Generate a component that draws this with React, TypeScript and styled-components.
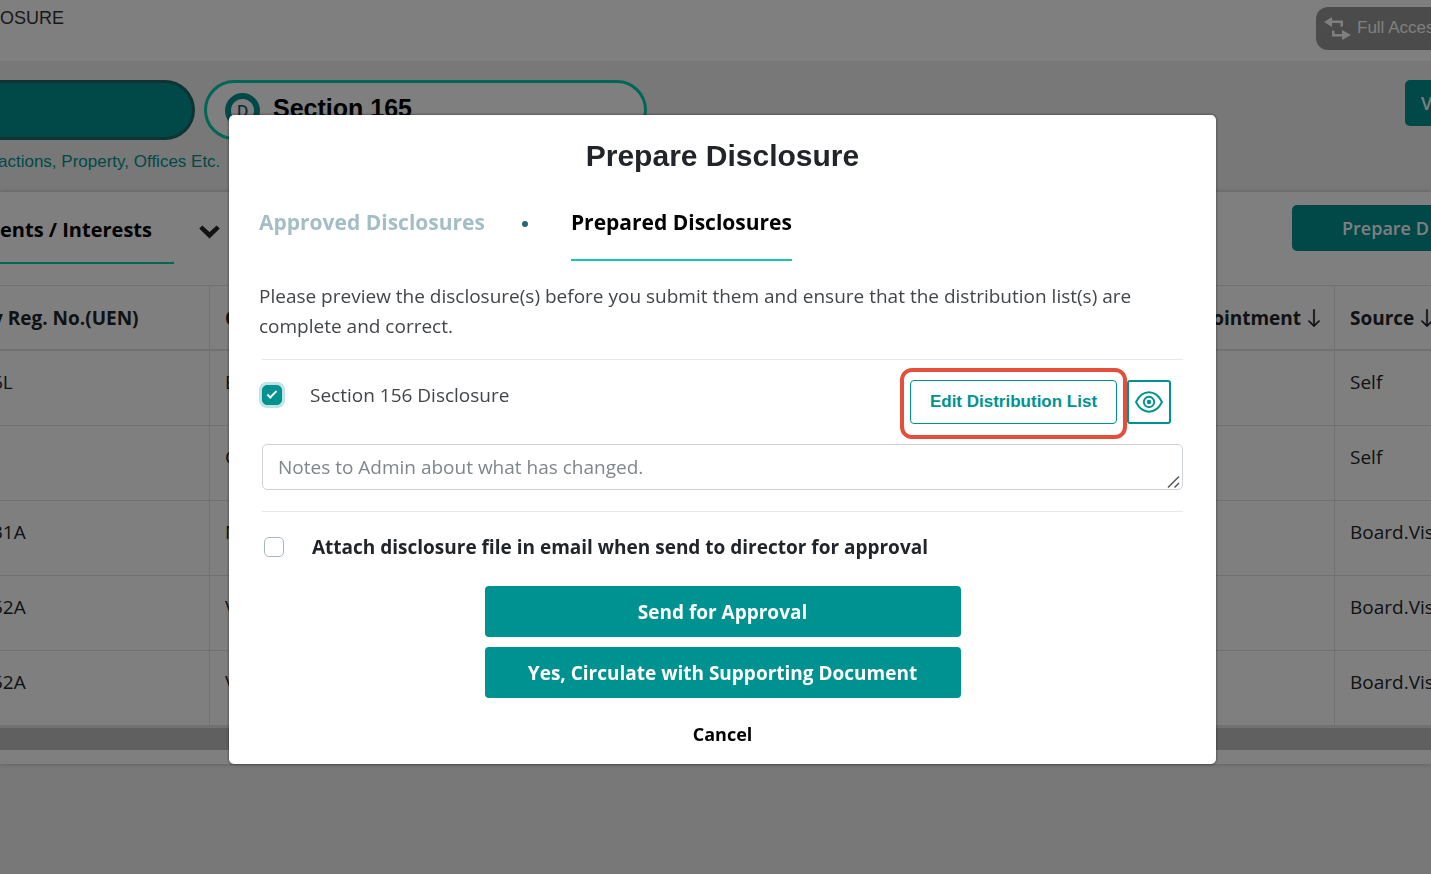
import React from "react";
import styled, { createGlobalStyle, css } from "styled-components";
import { BsArrowDown } from "react-icons/bs";

const teal = "#009290";
const mint = "#00cfae";
const ui = `"Open Sans", "Noto Sans", sans-serif`;
const arial = `"Liberation Sans", Arial, sans-serif`;

const GlobalStyle = createGlobalStyle`
  *, *::before, *::after { box-sizing: border-box; }
  html, body { margin: 0; height: 100%; }
  body { background: #f1f1f1; color: #212529; font: 19px/30px ${ui}; overflow: hidden; }
  #root { height: 100%; }
  button { font: inherit; cursor: pointer; }
  h1, h2, p { margin: 0; }
`;

const Page = styled.div`
  min-height: 100%;
  overflow: hidden;
`;

const TopBar = styled.header`
  display: flex;
  justify-content: space-between;
  align-items: flex-start;
  height: 61px;
  background: #fff;
  font-family: ${arial};
`;

const Crumb = styled.span`
  padding-top: 3px;
  color: #333;
  font-size: 18px;
`;

const AccessButton = styled.button`
  display: flex;
  align-items: center;
  gap: 6px;
  width: 115px;
  height: 43px;
  margin-top: 7px;
  padding: 0 0 0 8px;
  overflow: hidden;
  white-space: nowrap;
  border: 0;
  border-radius: 12px 0 0 12px;
  background: #969696;
  color: #fff;
  font-size: 17px;
  line-height: 22px;

  svg { flex: none; }
  span { padding-bottom: 2px; }
`;

const SectionBar = styled.nav`
  display: flex;
  align-items: flex-start;
  height: 131px;
  padding-top: 19px;
  font-family: ${arial};
`;

const SectionGroup = styled.div`
  flex: none;
  width: 204px;
`;

const pill = css`
  display: flex;
  align-items: center;
  height: 60px;
  border: 3px solid ${mint};
  font-family: ${arial};
`;

const ActivePill = styled.button`
  ${pill}
  width: 195px;
  border-color: #1c6660;
  border-left: 0;
  border-radius: 0 30px 30px 0;
  background: ${teal};
`;

const OutlinePill = styled.button`
  ${pill}
  width: 443px;
  gap: 13px;
  padding: 0 0 0 18px;
  border-radius: 30px;
  background: #fff;
  color: #000;
  font-size: 25px;
  font-weight: 700;
  line-height: 30px;
`;

const PillText = styled.span`
  padding-bottom: 4px;
`;

const Ring = styled.span`
  display: grid;
  place-items: center;
  width: 35px;
  height: 35px;
  padding-top: 2px;
  border: 6px solid ${teal};
  border-radius: 50%;
  color: #2a5070;
  font-family: ${ui};
  font-size: 16px;
  font-weight: 600;
  line-height: 20px;
`;

const Hint = styled.p`
  padding-top: 7px;
  color: ${teal};
  font-size: 17px;
  text-indent: -2px;
  white-space: nowrap;
`;

const EdgeButton = styled.button<{ $w: number; $pad: number }>`
  flex: none;
  width: ${(p) => p.$w}px;
  height: 46px;
  margin-left: auto;
  padding: 0 0 0 ${(p) => p.$pad}px;
  overflow: hidden;
  border: 0;
  border-radius: 5px 0 0 5px;
  background: ${teal};
  color: #fff;
  font-family: ${ui};
  font-size: 18px;
  font-weight: 600;
  text-align: left;
  white-space: nowrap;
`;

const Card = styled.section`
  height: 572px;
  background: #fff;
  box-shadow: 0 0 5px rgba(0, 0, 0, 0.25);
`;

const CardHead = styled.div`
  display: flex;
  align-items: flex-start;
  height: 93px;
  padding-top: 13px;
`;

const CardTab = styled.h2`
  width: 174px;
  height: 59px;
  padding-top: 10px;
  border-bottom: 2px solid ${mint};
  color: #000;
  font-size: 20px;
  font-weight: 700;
  line-height: 30px;
  white-space: nowrap;
`;

const Toggle = styled.button`
  display: flex;
  margin: 20px 0 0 25px;
  padding: 0;
  border: 0;
  background: none;
  color: #212529;
`;

const Table = styled.table`
  width: 100%;
  table-layout: fixed;
  border-collapse: separate;
  border-spacing: 0;
  border-top: 1px solid #dee2e6;

  th, td {
    height: 75px;
    padding: 0 0 12px 15px;
    border-bottom: 1px solid #dee2e6;
    border-right: 1px solid #dee2e6;
    overflow: hidden;
    text-align: left;
    white-space: nowrap;
  }
  th:last-child, td:last-child { border-right: 0; }
  th {
    height: 65px;
    padding-bottom: 0;
    border-bottom-width: 2px;
    font-weight: 700;
  }
  th:first-child, td:first-child { padding-left: 0; text-indent: -8px; }
  th:nth-child(3) { padding-right: 10px; text-align: right; }
  svg { vertical-align: -3px; margin-left: -2px; }
`;

const Scroll = styled.div`
  height: 24px;
  border-top: 2px solid #e2e2e2;
  background: #c1c1c1;
`;

const Backdrop = styled.div`
  position: fixed;
  inset: 0;
  padding: 115px 215px 0 229px;
  background: rgba(0, 0, 0, 0.5);
`;

const Dialog = styled.div`
  padding: 22px 30px 15px;
  border-radius: 5px;
  background: #fff;
  box-shadow: 0 0 3px rgba(0, 0, 0, 0.6);
`;

const Title = styled.h1`
  font: 700 30px/38px ${arial};
  text-align: center;
`;

const Tabs = styled.div`
  display: flex;
  align-items: flex-start;
  padding-top: 32px;
`;

const Tab = styled.button<{ $active?: boolean }>`
  height: 54px;
  padding: 0 0 22px;
  border: 0;
  border-bottom: 2px solid ${(p) => (p.$active ? "#1bc5ab" : "transparent")};
  background: none;
  color: ${(p) => (p.$active ? "#000" : "#a3bfc5")};
  font-size: 21px;
  font-weight: 700;
  line-height: 30px;
`;

const Dot = styled.span`
  width: 6px;
  height: 6px;
  margin: 14px 43px 0 37px;
  border-radius: 50%;
  background: #2c6478;
`;

const Intro = styled.p`
  padding: 20px 20px 18px 0;
  color: #424549;
`;

const Block = styled.div`
  margin: 0 3px;
  padding-top: 20px;
  border-top: 1px solid #e6e8ea;
`;

const CheckRow = styled.div`
  display: flex;
  align-items: flex-start;
`;

const CheckLabel = styled.label<{ $bold?: boolean }>`
  display: flex;
  align-items: center;
  gap: 28px;
  margin-right: auto;
  padding-left: ${(p) => (p.$bold ? 2 : 0)}px;
  color: ${(p) => (p.$bold ? "#212529" : "#424549")};
  font-weight: ${(p) => (p.$bold ? 700 : 400)};
`;

const Check = styled.input`
  appearance: none;
  flex: none;
  width: 20px;
  height: 20px;
  margin: 0;
  border: 1px solid #adb5bd;
  border-radius: 5px;
  background: #fff;
  display: grid;
  place-items: center;

  &:checked {
    border-color: ${teal};
    background: ${teal};
    box-shadow: 0 0 0 3px #bfe4e3;
  }
  &:checked::after {
    content: "";
    width: 10px;
    height: 5px;
    margin-bottom: 4px;
    border: solid #fff;
    border-width: 0 0 2px 2px;
    transform: rotate(-45deg);
  }
`;

const Highlight = styled.div`
  position: relative;
  margin-right: 10px;

  &::after {
    content: "";
    position: absolute;
    inset: -12px -10px -15px;
    border: 4px solid #e34f3a;
    border-radius: 12px;
    pointer-events: none;
  }
`;

const EditButton = styled.button`
  width: 207px;
  height: 44px;
  padding: 0;
  border: 1px solid ${teal};
  border-radius: 4px;
  background: #fff;
  color: ${teal};
  font: 700 17px/22px ${arial};
`;

const EyeButton = styled.button`
  display: grid;
  place-items: center;
  width: 44px;
  height: 44px;
  margin-right: 12px;
  padding: 0;
  border: 2px solid ${teal};
  border-radius: 3px;
  background: #fff;
`;

const NotesWrap = styled.div`
  position: relative;
  display: flex;
  margin: 20px 0 21px;

  svg { position: absolute; right: 2px; bottom: 1px; }
`;

const Notes = styled.textarea`
  width: 100%;
  height: 46px;
  padding: 7px 15px;
  resize: none;
  overflow: hidden;
  border: 1px solid #ced4da;
  border-radius: 5px;
  font: 19px/30px ${ui};

  &::placeholder { color: #7f868c; opacity: 1; }
`;

const Actions = styled.div`
  display: flex;
  flex-direction: column;
  align-items: center;
  gap: 10px;
  padding-top: 24px;
`;

const Primary = styled.button`
  width: 476px;
  height: 51px;
  padding: 0;
  border: 0;
  border-radius: 4px;
  background: ${teal};
  color: #fff;
  font-weight: 700;
`;

const Cancel = styled.button`
  margin-top: 11px;
  padding: 0;
  border: 0;
  background: none;
  color: #000;
  font-size: 18px;
  font-weight: 700;
`;

const rows = [
  ["6L", "E", "", "Self"],
  ["", "G", "", "Self"],
  ["31A", "N", "", "Board.Vis"],
  ["52A", "V", "", "Board.Vis"],
  ["52A", "V", "", "Board.Vis"],
];

export default function App() {
  return (
    <>
      <GlobalStyle />
      <Page>
        <TopBar>
          <Crumb>OSURE</Crumb>
          <AccessButton type="button">
            <svg width="27" height="23" viewBox="0 0 27 23" aria-hidden="true">
              <path
                d="M0 5 8 0v3.500h11v6h-2.500V6H8v4z M27 18l-9 5v-3.500H8v-6h2.500V17H18v-4z"
                fill="#fff"
              />
            </svg>
            <span>Full Acces</span>
          </AccessButton>
        </TopBar>

        <SectionBar>
          <SectionGroup>
            <ActivePill type="button" aria-label="Section 156" />
            <Hint>actions, Property, Offices Etc.</Hint>
          </SectionGroup>
          <OutlinePill type="button">
            <Ring>D</Ring>
            <PillText>Section 165</PillText>
          </OutlinePill>
          <EdgeButton type="button" $w={26} $pad={16}>V</EdgeButton>
        </SectionBar>

        <Card>
          <CardHead>
            <CardTab>ents / Interests</CardTab>
            <Toggle type="button" aria-label="Expand">
              <svg width="21" height="14" viewBox="0 0 21 14" aria-hidden="true">
                <path
                  d="M.8 3.600 3.300 1 10.500 7.600 17.700 1l2.500 2.600L10.500 13z"
                  fill="currentColor"
                  stroke="currentColor"
                  strokeLinejoin="round"
                />
              </svg>
            </Toggle>
            <EdgeButton type="button" $w={139} $pad={50}>Prepare D</EdgeButton>
          </CardHead>
          <Table>
            <colgroup>
              <col style={{ width: 210 }} />
              <col />
              <col />
              <col style={{ width: 96 }} />
            </colgroup>
            <thead>
              <tr>
                <th>y Reg. No.(UEN)</th>
                <th>C</th>
                <th>Appointment <BsArrowDown size={20} strokeWidth={0.5} /></th>
                <th>Source <BsArrowDown size={20} strokeWidth={0.5} /></th>
              </tr>
            </thead>
            <tbody>
              {rows.map((row, i) => (
                <tr key={i}>
                  {row.map((cell, j) => (
                    <td key={j}>{cell}</td>
                  ))}
                </tr>
              ))}
            </tbody>
          </Table>
          <Scroll />
        </Card>
      </Page>

      <Backdrop>
        <Dialog role="dialog" aria-modal="true" aria-labelledby="dialog-title">
          <Title id="dialog-title">Prepare Disclosure</Title>
          <Tabs>
            <Tab type="button">Approved Disclosures</Tab>
            <Dot />
            <Tab type="button" $active>Prepared Disclosures</Tab>
          </Tabs>
          <Intro>
            Please preview the disclosure(s) before you submit them and ensure that the distribution list(s) are
            complete and correct.
          </Intro>
          <Block>
            <CheckRow>
              <CheckLabel>
                <Check type="checkbox" defaultChecked />
                Section 156 Disclosure
              </CheckLabel>
              <Highlight>
                <EditButton type="button">Edit Distribution List</EditButton>
              </Highlight>
              <EyeButton type="button" aria-label="Preview disclosure">
                <svg width="28" height="22" viewBox="0 0 28 22" fill="none" stroke={teal} strokeWidth="1.900">
                  <path d="M1 11C4 5 9 1.300 14 1.300S24 5 27 11c-3 6-8 9.700-13 9.700S4 17 1 11z" />
                  <circle cx="14" cy="11" r="5.200" />
                  <circle cx="14" cy="11" r="2.200" fill={teal} stroke="none" />
                </svg>
              </EyeButton>
            </CheckRow>
            <NotesWrap>
              <Notes aria-label="Notes to Admin" placeholder="Notes to Admin about what has changed." />
              <svg width="14" height="14" viewBox="0 0 14 14" stroke="#555" strokeWidth="1.500" aria-hidden="true">
                <path d="M1 12.500 12 1.500M7.500 12.500 12 8" />
              </svg>
            </NotesWrap>
          </Block>
          <Block>
            <CheckRow>
              <CheckLabel $bold>
                <Check type="checkbox" />
                Attach disclosure file in email when send to director for approval
              </CheckLabel>
            </CheckRow>
          </Block>
          <Actions>
            <Primary type="button">Send for Approval</Primary>
            <Primary type="button">Yes, Circulate with Supporting Document</Primary>
            <Cancel type="button">Cancel</Cancel>
          </Actions>
        </Dialog>
      </Backdrop>
    </>
  );
}
